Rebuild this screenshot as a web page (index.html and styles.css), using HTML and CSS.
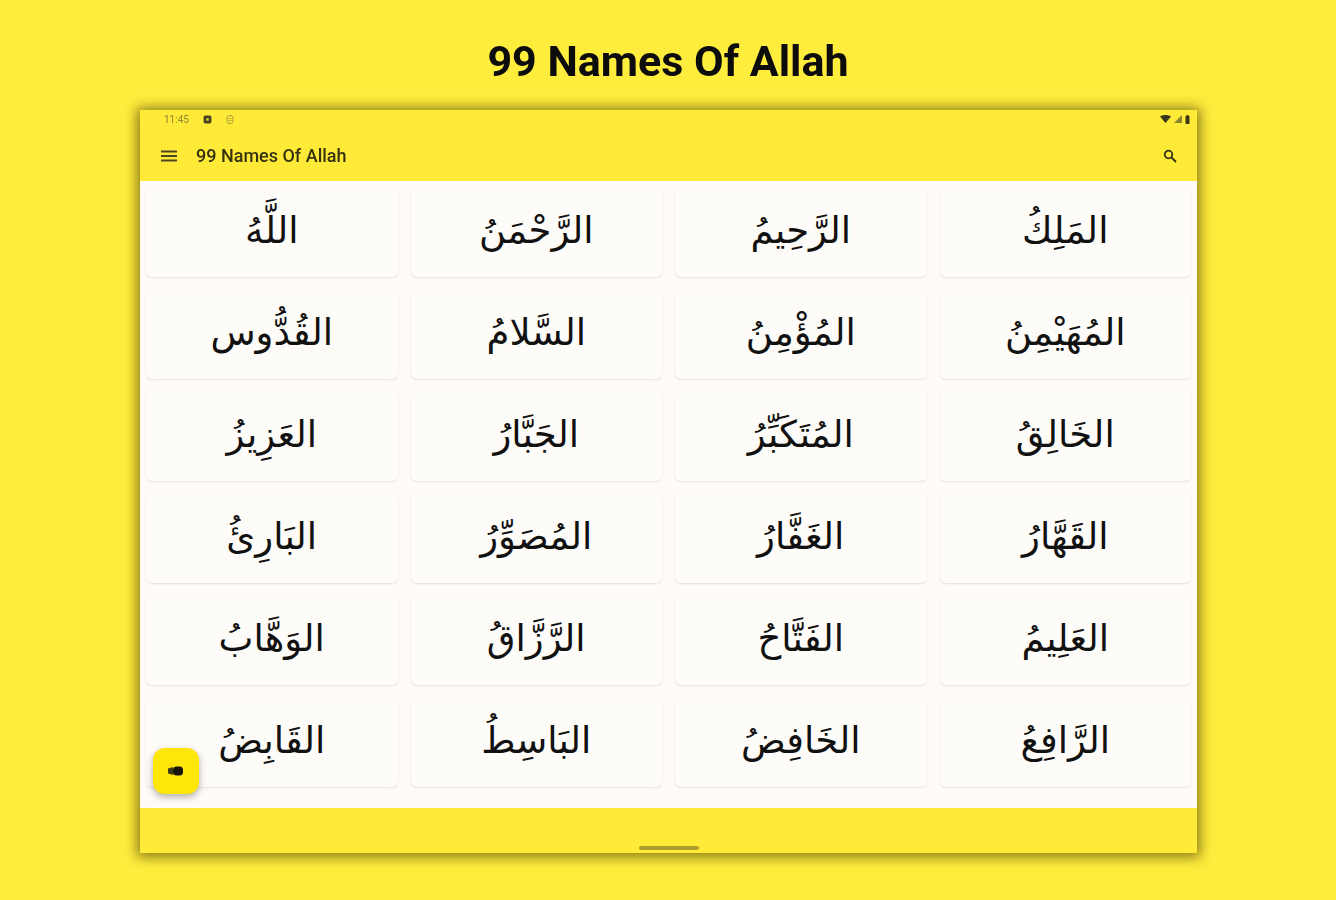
FILE: index.html
```html
<!DOCTYPE html>
<html lang="en">
<head>
    <meta charset="UTF-8">
    <meta name="viewport" content="width=device-width, initial-scale=1.0">
    <title>99 Names Of Allah</title>
    <link rel="stylesheet" href="styles.css">
</head>
<body>
    <h1 class="headline">99 Names Of Allah</h1>

    <div class="tablet">
        <div class="status-bar">
            <div class="status-left">
                <span class="clock">11:45</span>
                <svg class="status-icon" width="9" height="9" viewBox="0 0 8 8"><rect x="0.5" y="0.5" width="7" height="7" rx="1.5" fill="#4a4520"/><rect x="3" y="3" width="2" height="2" fill="#f5e33a"/></svg>
                <svg class="status-icon" width="8" height="11" viewBox="0 0 8 10"><rect x="1" y="0.8" width="6" height="8.4" rx="3" fill="none" stroke="#a89c3a" stroke-width="1"/><path d="M2.5 4h3M2.5 6h3" stroke="#a89c3a" stroke-width="0.8"/></svg>
            </div>
            <div class="status-right">
                <svg width="11" height="8" viewBox="0 0 11 8"><path d="M0 1.500C3 -0.500 8 -0.500 11 1.500L5.500 8Z" fill="#3a3618"/></svg>
                <svg width="8" height="8" viewBox="0 0 8 8"><path d="M8 0V8H0Z" fill="#8c8330"/></svg>
                <svg width="5" height="9" viewBox="0 0 5 9"><rect x="0.5" y="1" width="4" height="8" rx="0.8" fill="#3a3618"/><rect x="1.500" y="0" width="2" height="1" fill="#3a3618"/></svg>
            </div>
        </div>

        <div class="toolbar">
            <svg class="menu-icon" width="16" height="12" viewBox="0 0 16 12"><path d="M0 1.500H16M0 6H16M0 10.500H16" stroke="#4b4620" stroke-width="1.800"/></svg>
            <span class="toolbar-title">99 Names Of Allah</span>
            <svg class="search-icon" width="14" height="14" viewBox="0 0 14 14"><circle cx="5.500" cy="5.500" r="3.800" fill="none" stroke="#37331a" stroke-width="1.800"/><path d="M8.500 8.500L13 13" stroke="#37331a" stroke-width="2"/></svg>
        </div>

        <div class="names-grid" dir="ltr">
            <div class="name-card">اللَّهُ</div>
            <div class="name-card">الرَّحْمَنُ</div>
            <div class="name-card">الرَّحِيمُ</div>
            <div class="name-card">المَلِكُ</div>

            <div class="name-card">القُدُّوس</div>
            <div class="name-card">السَّلامُ</div>
            <div class="name-card">المُؤْمِنُ</div>
            <div class="name-card">المُهَيْمِنُ</div>

            <div class="name-card">العَزِيزُ</div>
            <div class="name-card">الجَبَّارُ</div>
            <div class="name-card">المُتَكَبِّرُ</div>
            <div class="name-card">الخَالِقُ</div>

            <div class="name-card">البَارِئُ</div>
            <div class="name-card">المُصَوِّرُ</div>
            <div class="name-card">الغَفَّارُ</div>
            <div class="name-card">القَهَّارُ</div>

            <div class="name-card">الوَهَّابُ</div>
            <div class="name-card">الرَّزَّاقُ</div>
            <div class="name-card">الفَتَّاحُ</div>
            <div class="name-card">العَلِيمُ</div>

            <div class="name-card">القَابِضُ</div>
            <div class="name-card">البَاسِطُ</div>
            <div class="name-card">الخَافِضُ</div>
            <div class="name-card">الرَّافِعُ</div>

            <button class="fab" aria-label="video">
                <svg width="18" height="10" viewBox="0 0 18 10"><rect x="6" y="0.500" width="10" height="9" rx="3.500" fill="#15130a"/><path d="M1 2.500L6 1V9L1 7.500Z" fill="#3d3a16"/></svg>
            </button>
        </div>

        <div class="nav-bar">
            <div class="nav-handle"></div>
        </div>
    </div>
</body>
</html>
```

FILE: styles.css
```css
/* Page */
body {
    margin: 0;
    height: 900px;
    overflow: hidden;
    background: #ffed3d;
    font-family: 'Roboto', 'Liberation Sans', sans-serif;
    display: flex;
    flex-direction: column;
    align-items: center;
}

.headline {
    margin: 37px 0 0;
    height: 73px;
    font-size: 43px;
    line-height: 48px;
    font-weight: 700;
    color: #0c0c0c;
    filter: blur(0.5px);
}

/* Tablet frame */
.tablet {
    width: 1057px;
    height: 743px;
    margin-left: 1px;
    background: #ffeb37;
    box-shadow: 0 1px 12px 3px rgba(70, 60, 0, 0.65);
    display: flex;
    flex-direction: column;
}

.status-bar {
    height: 18px;
    padding: 0 7px 0 24px;
    display: flex;
    justify-content: space-between;
    align-items: center;
    filter: blur(0.6px);
}

.status-left,
.status-right {
    display: flex;
    align-items: center;
}

.status-left {
    gap: 14px;
}

.status-right {
    gap: 3px;
}

.clock {
    font-size: 10px;
    color: #8d8436;
}

.toolbar {
    height: 53px;
    padding: 2px 20px 0 21px;
    box-sizing: border-box;
    display: flex;
    align-items: center;
    filter: blur(0.6px);
}

.toolbar-title {
    margin-left: 19px;
    font-size: 18px;
    font-weight: 500;
    color: #35310f;
    flex: 1;
}

/* Names */
.names-grid {
    position: relative;
    height: 627px;
    box-sizing: border-box;
    padding: 6px 6px 0;
    background: #fffcf8;
    display: grid;
    grid-template-columns: repeat(4, 1fr);
    grid-auto-rows: 90px;
    column-gap: 13px;
    row-gap: 12px;
}

.name-card {
    background: #fefcf8;
    border-radius: 6px;
    box-shadow: 0 1px 2px rgba(90, 85, 70, 0.16);
    display: flex;
    justify-content: center;
    align-items: center;
    padding-bottom: 3px;
    box-sizing: border-box;
    font-family: 'DejaVu Sans', 'Noto Sans', sans-serif;
    font-size: 37px;
    color: #111;
    white-space: nowrap;
}

.fab {
    position: absolute;
    left: 13px;
    top: 567px;
    width: 46px;
    height: 46px;
    padding: 0;
    border: none;
    border-radius: 12px;
    background: #ffe60a;
    box-shadow: 0 3px 7px rgba(60, 55, 30, 0.4);
    display: flex;
    justify-content: center;
    align-items: center;
}

/* Bottom bar */
.nav-bar {
    flex: 1;
    display: flex;
    justify-content: center;
    align-items: flex-end;
    padding-bottom: 3px;
}

.nav-handle {
    width: 60px;
    height: 4px;
    border-radius: 2px;
    background: #a89d2b;
}
```
